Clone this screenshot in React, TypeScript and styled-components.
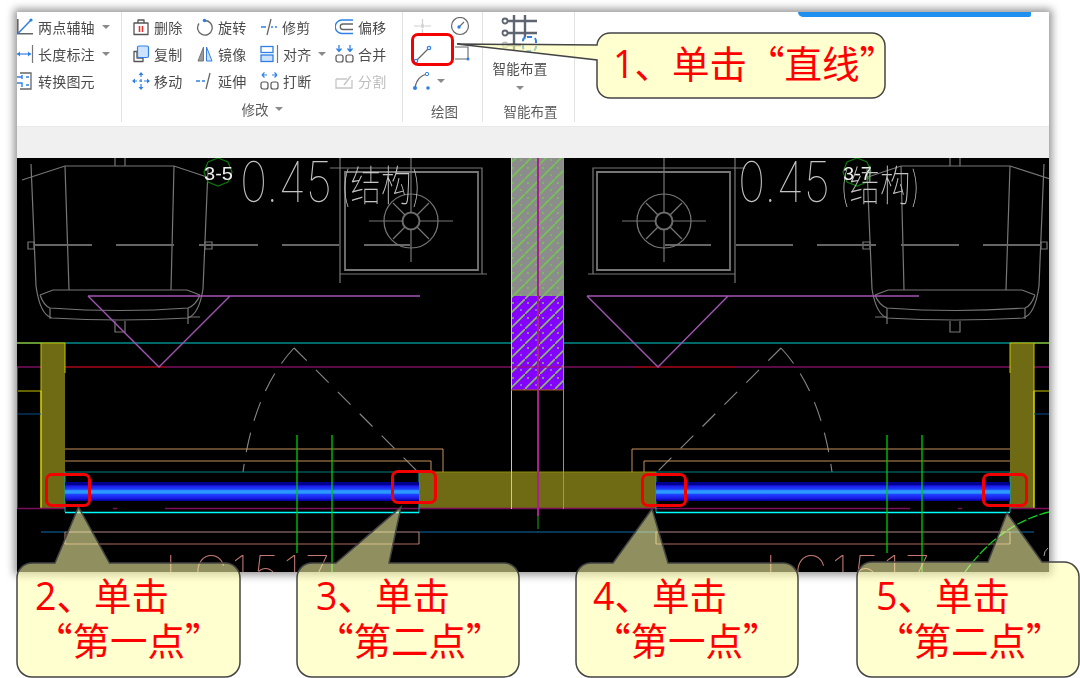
import React from "react";
import styled, { createGlobalStyle } from "styled-components";

const Global = createGlobalStyle`
  html, body { margin: 0; padding: 0; background: #fff; }
  #root { width: 1080px; height: 678px; }
`;

const FONT = `"Noto Sans CJK SC", "Liberation Sans", sans-serif`;

const Page = styled.div`
  position: relative;
  width: 1080px;
  height: 678px;
  overflow: hidden;
  background: #fff;
  padding: 12px 0 0 17px;
  box-sizing: border-box;
  font-family: ${FONT};
`;

const Win = styled.div`
  width: 1032px;
  height: 560px;
  display: flex;
  flex-direction: column;
  background: #fff;
  box-shadow: 0 0 8px 3px rgba(0, 0, 0, 0.42);
`;

const Ribbon = styled.div`
  height: 114px;
  display: flex;
  flex: none;
  background: #fff;
  filter: blur(0.45px);
  overflow: hidden;
`;

const Group = styled.section<{ $w: number }>`
  width: ${(p) => p.$w}px;
  height: 110px;
  flex: none;
  box-sizing: border-box;
  border-right: 1px solid #e2e2e2;
  display: flex;
  flex-direction: column;
  padding-top: 1px;
`;

const Rows = styled.div<{ $cols: string; $pad: number }>`
  height: 81px;
  display: grid;
  grid-template-columns: ${(p) => p.$cols};
  grid-auto-rows: 27px;
  padding-left: ${(p) => p.$pad}px;
  flex: none;
`;

const Tool = styled.div<{ $gap?: number }>`
  display: flex;
  align-items: center;
  gap: ${(p) => p.$gap ?? 4}px;
  white-space: nowrap;
`;

const Label = styled.span<{ $off?: boolean }>`
  font-size: 14px;
  line-height: 20px;
  letter-spacing: 0.2px;
  color: ${(p) => (p.$off ? "#bdbdbd" : "#4b4b4b")};
`;

const Caret = styled.i<{ $m?: number }>`
  display: inline-block;
  width: 0;
  height: 0;
  margin-left: ${(p) => p.$m ?? 3}px;
  border-left: 4px solid transparent;
  border-right: 4px solid transparent;
  border-top: 4px solid #8a8a8a;
`;

const GroupTitle = styled.div<{ $shift?: number; $down?: number }>`
  height: 24px;
  margin-top: ${(p) => 3 + (p.$down ?? 0)}px;
  padding-left: ${(p) => p.$shift ?? 0}px;
  display: flex;
  align-items: center;
  justify-content: center;
  font-size: 13.5px;
  color: #5a5a5a;
`;

const BigTool = styled.div`
  width: 74px;
  height: 81px;
  display: flex;
  flex-direction: column;
  align-items: center;
  flex: none;
`;

const BigLabel = styled(Label)`
  margin-top: 5px;
  font-size: 13.5px;
  letter-spacing: 0.2px;
`;

const BigCaret = styled(Caret)`
  margin: 8px 0 0;
`;

const Band = styled.div`
  height: 32px;
  flex: none;
  background: #f0f0f0;
  border-top: 1px solid #e9e9e9;
  box-sizing: border-box;
`;

const Canvas = styled.svg`
  display: block;
  width: 1032px;
  height: 414px;
  flex: none;
  background: #000;
  filter: blur(0.3px);
`;

const TopBar = styled.div`
  position: absolute;
  left: 798px;
  top: 12px;
  width: 233px;
  height: 5px;
  background: #1e90f0;
  border-bottom-left-radius: 5px;
  border-bottom-right-radius: 2px;
`;

const Balloons = styled.svg`
  position: absolute;
  left: 0;
  top: 0;
  width: 1080px;
  height: 678px;
`;

const Marker = styled.div<{ $x: number; $y: number; $w: number; $h: number }>`
  position: absolute;
  left: ${(p) => p.$x}px;
  top: ${(p) => p.$y}px;
  width: ${(p) => p.$w}px;
  height: ${(p) => p.$h}px;
  box-sizing: border-box;
  border: 3px solid #f40000;
  border-radius: 7px;
`;

const Note = styled.div<{ $x: number; $y: number }>`
  position: absolute;
  left: ${(p) => p.$x}px;
  top: ${(p) => p.$y}px;
  color: #ff0000;
  font-family: "Noto Sans CJK SC", sans-serif;
  font-size: 37.5px;
  line-height: 45px;
  white-space: nowrap;
`;

const NoteLine = styled.div`
  height: 45px;
`;

const Digit = styled.span`
  font-family: "Open Sans", sans-serif;
`;

/* ---------- ribbon icons ---------- */
const BLUE = "#2f80e6";
const GRAY = "#555";

const Ico = ({ w = 18, h = 18, children }: { w?: number; h?: number; children: React.ReactNode }) => (
  <svg width={w} height={h} viewBox={`0 0 ${w} ${h}`} fill="none" style={{ flex: "none" }}>
    {children}
  </svg>
);

const icons: Record<string, React.ReactNode> = {
  axis: (
    <Ico w={17}>
      <path d="M0.800 1V15.800H16" stroke="#666" strokeWidth="1.600" />
      <path d="M1 15.500L14 2" stroke={BLUE} strokeWidth="1.500" />
      <circle cx="14" cy="2" r="1.600" fill={BLUE} />
    </Ico>
  ),
  dim: (
    <Ico w={17}>
      <path d="M0 9H14" stroke={BLUE} strokeWidth="1.200" />
      <path d="M0 9l3-2.500v5zM14 9l-3-2.500v5z" fill={BLUE} />
      <path d="M15.500 0V18" stroke="#777" strokeWidth="1.200" />
    </Ico>
  ),
  conv: (
    <Ico w={15}>
      <path d="M3 1H14V17H3" stroke="#666" strokeWidth="1.300" />
      <path d="M0 5H5M5 3V7M0 11H5V15M9 5H12M9 13H12" stroke={BLUE} strokeWidth="1.400" />
    </Ico>
  ),
  del: (
    <Ico>
      <path d="M2 5H16V16.500H2ZM6 5V2H12V5" stroke={GRAY} strokeWidth="1.300" strokeLinejoin="round" />
      <path d="M7.500 8V14M10.500 8V14" stroke="#e23232" strokeWidth="1.600" />
    </Ico>
  ),
  rot: (
    <Ico>
      <path d="M9 2.500A7.300 7.300 0 1 1 3 5.500" stroke="#666" strokeWidth="1.300" />
      <circle cx="8.500" cy="2.500" r="1.800" fill={BLUE} />
    </Ico>
  ),
  trim: (
    <Ico>
      <path d="M11 1L7 17" stroke="#666" strokeWidth="1.300" />
      <path d="M1 9H6M11 9H13M15 9H17" stroke={BLUE} strokeWidth="1.400" />
    </Ico>
  ),
  offset: (
    <Ico w={19}>
      <path d="M18 2H7A6.500 6.500 0 0 0 7 15.500H18" stroke={BLUE} strokeWidth="1.300" />
      <path d="M18 6H8A2.700 2.700 0 0 0 8 11.500H18" stroke="#666" strokeWidth="1.300" />
    </Ico>
  ),
  copy: (
    <Ico>
      <path d="M2 6.500H5V13H11V16.500H2Z" stroke={GRAY} strokeWidth="1.300" strokeLinejoin="round" />
      <rect x="5.500" y="1" width="11" height="11.500" rx="1.500" fill="#cfe2fb" stroke={BLUE} strokeWidth="1.200" />
    </Ico>
  ),
  mirror: (
    <Ico>
      <path d="M7.500 2L2 16H7.500Z" fill="#9a9a9a" stroke="#777" />
      <path d="M10.500 2L16 16H10.500Z" fill="#cfe2fb" stroke={BLUE} />
    </Ico>
  ),
  align: (
    <Ico w={19}>
      <rect x="1" y="1.500" width="12" height="6" stroke={BLUE} strokeWidth="1.300" />
      <rect x="1" y="10" width="12" height="6.500" fill="#cfe2fb" stroke={BLUE} strokeWidth="1.300" />
      <path d="M17.500 0V18" stroke="#777" strokeWidth="1.200" />
    </Ico>
  ),
  merge: (
    <Ico w={19}>
      <path d="M4 0V6M15 0V6M1.500 3.500L4 6.500 6.500 3.500M12.500 3.500L15 6.500 17.500 3.500" stroke={BLUE} strokeWidth="1.300" />
      <rect x="1" y="10" width="7" height="7" rx="2" stroke={GRAY} strokeWidth="1.200" />
      <rect x="11" y="10" width="7" height="7" rx="2" stroke={GRAY} strokeWidth="1.200" />
    </Ico>
  ),
  move: (
    <Ico>
      <path d="M9 2V16M2 9H16" stroke={BLUE} strokeWidth="1.200" strokeDasharray="3 2" />
      <path d="M9 0l2.500 3h-5zM9 18l2.500-3h-5zM0 9l3-2.500v5zM18 9l-3-2.500v5z" fill={BLUE} />
    </Ico>
  ),
  ext: (
    <Ico>
      <path d="M14 1L10 17" stroke="#666" strokeWidth="1.300" />
      <path d="M0 9H4M6 9H9" stroke={BLUE} strokeWidth="1.600" />
    </Ico>
  ),
  brk: (
    <Ico w={19}>
      <path d="M7 3H2M12 3H17M2 3L4.500 .5M2 3L4.500 5.500M17 3L14.500 .5M17 3L14.500 5.500" stroke={BLUE} strokeWidth="1.200" />
      <rect x="1" y="10" width="7" height="7" rx="2" stroke={GRAY} strokeWidth="1.200" />
      <rect x="11" y="10" width="7" height="7" rx="2" stroke={GRAY} strokeWidth="1.200" />
    </Ico>
  ),
  split: (
    <Ico w={19}>
      <path d="M1 7H12M1 7V16H17V8" stroke="#c6c6c6" strokeWidth="1.300" />
      <path d="M9 13L16 4" stroke="#c6c6c6" strokeWidth="1.500" />
    </Ico>
  ),
  cross: (
    <Ico w={20} h={20}>
      <path d="M1 9H7M12 9H18M9.500 2V7M9.500 12V17" stroke="#d0d0d0" strokeWidth="1.200" />
      <circle cx="9.500" cy="9" r="2" fill="#d4d4d4" />
    </Ico>
  ),
  gauge: (
    <Ico w={20} h={20}>
      <circle cx="10" cy="9" r="8.500" stroke="#666" strokeWidth="1.200" />
      <path d="M9 10L14 5" stroke="#666" strokeWidth="1.100" />
      <circle cx="9" cy="10" r="1.700" fill={BLUE} />
    </Ico>
  ),
  line: (
    <Ico w={20} h={20}>
      <path d="M3 17L16 4" stroke="#666" strokeWidth="1.200" />
      <circle cx="3" cy="17" r="1.700" fill="#fff" stroke={BLUE} strokeWidth="1.200" />
      <circle cx="16" cy="4" r="1.700" fill="#fff" stroke={BLUE} strokeWidth="1.200" />
    </Ico>
  ),
  rect: (
    <Ico w={20} h={20}>
      <path d="M5 3H18V15H5" stroke="#666" strokeWidth="1.100" />
      <circle cx="18" cy="15" r="1.500" fill={BLUE} />
    </Ico>
  ),
  arc: (
    <Ico w={21} h={20}>
      <path d="M2 17C3 9 8 4 14 3" stroke="#666" strokeWidth="1.200" />
      <circle cx="2" cy="17" r="2" fill={BLUE} />
      <circle cx="14" cy="3" r="1.700" fill="#fff" stroke={BLUE} />
      <circle cx="15" cy="17" r="1.800" fill={BLUE} />
    </Ico>
  ),
  smart: (
    <Ico w={38} h={40}>
      <path d="M6 8H36M6 20H36M6 32H20M13 2V38M24 2V24" stroke="#5f6570" strokeWidth="2.400" />
      <circle cx="4" cy="8" r="2.500" fill="#fff" stroke="#5f6570" strokeWidth="1.800" />
      <circle cx="4" cy="20" r="2.500" fill="#fff" stroke="#5f6570" strokeWidth="1.800" />
      <circle cx="4" cy="32" r="2.500" fill="#fff" stroke="#c0c0c0" strokeWidth="1.800" />
      <rect x="22" y="24" width="13" height="14" rx="4" stroke={BLUE} strokeWidth="2" strokeDasharray="5 3" fill="#fff" />
    </Ico>
  ),
};

type T = { icon: string; text?: string; caret?: boolean; off?: boolean; gap?: number };

const axisTools: T[] = [
  { icon: "axis", text: "两点辅轴", caret: true },
  { icon: "dim", text: "长度标注", caret: true },
  { icon: "conv", text: "转换图元", gap: 6 },
];

const editTools: T[] = [
  { icon: "del", text: "删除" },
  { icon: "rot", text: "旋转" },
  { icon: "trim", text: "修剪" },
  { icon: "offset", text: "偏移" },
  { icon: "copy", text: "复制" },
  { icon: "mirror", text: "镜像" },
  { icon: "align", text: "对齐", caret: true },
  { icon: "merge", text: "合并" },
  { icon: "move", text: "移动" },
  { icon: "ext", text: "延伸" },
  { icon: "brk", text: "打断" },
  { icon: "split", text: "分割", off: true },
];

const drawTools: T[] = [
  { icon: "cross" },
  { icon: "gauge" },
  { icon: "line" },
  { icon: "rect" },
  { icon: "arc", caret: true, gap: 0 },
];

const ToolItem = ({ t }: { t: T }) => (
  <Tool $gap={t.gap}>
    {icons[t.icon]}
    {t.text && <Label $off={t.off}>{t.text}</Label>}
    {t.caret && <Caret />}
  </Tool>
);

/* ---------- CAD drawing ---------- */
const G = "#777";

const HalfPlan = () => (
  <g fill="none">
    {/* fixture */}
    <g stroke={G} strokeWidth="1.200">
      <path d="M22 181L65 167H174L207 178" />
      <path d="M31 165L36 287Q40 316 52 319Q120 323 188 319Q199 315 203 290L208 170" />
      <path d="M65 167L69 291M174 167L171 291" />
      <path d="M40 296L53 291H187L200 296M50 309Q120 314 188 309M40 296Q44 307 50 309M200 296Q196 306 188 309" />
      <path d="M50 309V320M188 309V325M188 318H200" />
      <path d="M115 159V167M125 159V167M115 322V333H125V322" />
      <path d="M28 243h6v7h-6zM205 243h7v7h-7z" />
    </g>
    <path d="M34 246H92M116 246H174M199 246H258M282 246H339M364 246H410" stroke="#666" strokeWidth="2" />
    {/* burner box */}
    <g stroke={G} strokeWidth="1.200">
      <path d="M330 169H482V275H340V284M340 159V275M340 275H487" />
      <path d="M345 173H478V271H345Z" strokeWidth="1.800" />
      <circle cx="411" cy="222" r="27" />
      <circle cx="411" cy="222" r="8.500" strokeWidth="2" stroke="#6a6a6a" />
      <path d="M369 222H403M419 222H453M411 159V214M411 230V263" />
      <path d="M393 204L405 216M429 204L417 216M393 240L405 228M429 240L417 228" />
    </g>
    {/* door swing */}
    <path d="M294 349L417 472" stroke="#888" strokeWidth="1.100" strokeDasharray="18 13" />
    <path d="M294 349Q254 392 243 473" stroke="#888" strokeWidth="1.100" strokeDasharray="20 12" />
    {/* olive column and yellow frame */}
    <rect x="41" y="344" width="24" height="165" fill="#6f6a14" />
    <path d="M17 344H65V374M41 344V509M17 392H41" stroke="#c9c400" strokeWidth="1" />
    <path d="M41 392V509" stroke="#e6e000" strokeWidth="1" />
    <path d="M17.500 368V509M17 415H41" stroke="#0a4f8a" strokeWidth="1" />
    {/* wall band */}
    <rect x="419" y="473" width="119" height="36" fill="#6f6a14" />
    <path d="M419 473H538" stroke="#8f8a10" strokeWidth="1" />
    {/* lines under the window */}
    <path d="M17 509.500H65M113 509.500H117M165 509.500H419M419 509.500H538" stroke="#7a0f5e" strokeWidth="1.600" />
    <path d="M41 533H538" stroke="#0a4a70" strokeWidth="1.600" />
    <path d="M65 533H419M65 545H419" stroke="#74483f" strokeWidth="1.400" />
    <path d="M65 533V545M419 533V545" stroke="#c09070" strokeWidth="1" />
    <path d="M65 450H443V473M65 462H431V473" stroke="#c8905c" strokeWidth="1" />
    <path d="M65 473H419" stroke="#008080" strokeWidth="1.200" />
    <path d="M65 473V513M419 473V513" stroke="#00a8a8" strokeWidth="1" />
    <path d="M65 513.500H419" stroke="#00ffff" strokeWidth="1.500" />
    {/* blue duct */}
    <rect x="65" y="483" width="354" height="19" fill="url(#duct)" />
  </g>
);

const Cad = () => (
  <Canvas viewBox="17 159 1032 414" preserveAspectRatio="none">
    <defs>
      <linearGradient id="duct" x1="0" y1="0" x2="0" y2="1">
        <stop offset="0" stopColor="#000090" />
        <stop offset="0.14" stopColor="#000090" />
        <stop offset="0.2" stopColor="#1a1ae6" />
        <stop offset="0.38" stopColor="#2040ff" />
        <stop offset="0.46" stopColor="#2a9aff" />
        <stop offset="0.58" stopColor="#2a9aff" />
        <stop offset="0.66" stopColor="#2040ff" />
        <stop offset="0.86" stopColor="#1a1ae6" />
        <stop offset="1" stopColor="#000090" />
      </linearGradient>
      <pattern id="hatchGray" width="15" height="15" patternUnits="userSpaceOnUse">
        <rect width="15" height="15" fill="#8c8c8c" />
        <path d="M-2 17L17 -2" stroke="#74c454" strokeWidth="1.600" />
        <circle cx="3" cy="4" r="1.100" fill="#74c454" />
        <circle cx="11" cy="11" r="0.900" fill="#74c454" />
      </pattern>
      <pattern id="hatchViolet" width="15" height="15" patternUnits="userSpaceOnUse">
        <rect width="15" height="15" fill="#8400ff" />
        <path d="M-2 17L17 -2" stroke="#86bf66" strokeWidth="1.600" />
        <circle cx="3" cy="4" r="1" fill="#86bf66" />
        <circle cx="11" cy="11" r="0.900" fill="#86a0b0" />
      </pattern>
    </defs>

    {/* long section lines */}
    <path d="M17 344H511M564 344H1049" stroke="#008a8a" strokeWidth="1.500" fill="none" />
    <path d="M17 368H1049" stroke="#7a0f5e" strokeWidth="1.500" fill="none" />
    <path d="M65 368H165M636 368H736" stroke="#8a0505" strokeWidth="1.500" fill="none" />

    <HalfPlan />
    <g transform="translate(1075 0) scale(-1 1)">
      <HalfPlan />
    </g>

    {/* centre column */}
    <rect x="511" y="159" width="53" height="138" fill="url(#hatchGray)" />
    <rect x="511" y="297" width="53" height="94" fill="url(#hatchViolet)" />
    <path d="M511 368H564" stroke="#a01070" strokeWidth="1.300" opacity="0.8" />
    <path d="M511.500 159V510" stroke="#e2dc00" strokeWidth="1" fill="none" />
    <path d="M563.500 159V510" stroke="#a9a400" strokeWidth="1" fill="none" />
    <path d="M511 391H564" stroke="#a05a10" strokeWidth="1" />
    <path d="M538 159V517" stroke="#a8208c" strokeWidth="2" fill="none" />
    <path d="M538 517V530" stroke="#0a5a0a" strokeWidth="2" fill="none" />

    {/* triangles */}
    <path d="M88 297H420M88 297L159 368L230 297" stroke="#a254b4" strokeWidth="1.400" fill="none" />
    <path d="M587 297H919M587 297L658 368L728 297" stroke="#a254b4" strokeWidth="1.400" fill="none" />

    {/* green risers */}
    <path d="M297 436V554M332 436V573M887 436V554M922 436V573" stroke="#00cc00" strokeWidth="1.300" fill="none" />
    <path d="M1049 513Q1000 525 965 573" stroke="#12d020" strokeWidth="1.300" strokeDasharray="10 2" fill="none" />
    <path d="M1048 549Q1044 552 1044 557" stroke="#aaa" strokeWidth="1" fill="none" />

    {/* tags */}
    <path d="M218 159l10 4 4 10-4 10-10 4-10-4-4-10 4-10z" stroke="#0a7a0a" strokeWidth="1.200" fill="none" />
    <path d="M857 159l10 4 4 10-4 10-10 4-10-4-4-10 4-10z" stroke="#0a7a0a" strokeWidth="1.200" fill="none" />
    <g fontFamily='"Liberation Sans", sans-serif' fontSize="18" fill="#eee">
      <text x="204" y="181" textLength="29" lengthAdjust="spacingAndGlyphs">3-5</text>
      <text x="843" y="181" textLength="29" lengthAdjust="spacingAndGlyphs">3-7</text>
    </g>
    <g fill="#c4c4c4" fontFamily='Inter, "Noto Sans CJK SC", sans-serif' fontWeight="100">
      <text x="240" y="203" fontSize="56" textLength="92" lengthAdjust="spacingAndGlyphs">0.45</text>
      <text x="738" y="203" fontSize="56" textLength="92" lengthAdjust="spacingAndGlyphs">0.45</text>
      <text x="341" y="202" fontSize="42" textLength="80" lengthAdjust="spacingAndGlyphs">(结构)</text>
      <text x="840" y="202" fontSize="42" textLength="80" lengthAdjust="spacingAndGlyphs">(结构)</text>
    </g>
    <g fill="#c47a72" fontFamily="Inter, sans-serif" fontWeight="100" fontSize="46">
      <text x="165" y="590" textLength="165">LC1517</text>
      <text x="765" y="590" textLength="165">LC1517</text>
    </g>
  </Canvas>
);

/* ---------- overlays ---------- */
const balloon = (
  l: number,
  t: number,
  r: number,
  b: number,
  rad: number,
  tail: string
) =>
  `M${l + rad} ${t}${tail}H${r - rad}A${rad} ${rad} 0 0 1 ${r} ${t + rad}V${b - rad}A${rad} ${rad} 0 0 1 ${r - rad} ${b}H${l + rad}A${rad} ${rad} 0 0 1 ${l} ${b - rad}V${t + rad}A${rad} ${rad} 0 0 1 ${l + rad} ${t}Z`;

const balloonPaths = [
  "M610 33H872A13 13 0 0 1 885 46V85A13 13 0 0 1 872 98H610A13 13 0 0 1 597 85V60L457 44L597 45A13 13 0 0 1 610 33Z",
  balloon(17, 563, 240, 677, 15, "H55L78.500 507L109.500 563"),
  balloon(297, 563, 519, 677, 15, "H336L401 507L389 563"),
  balloon(576, 563, 798, 677, 15, "H613L652 509L668 563"),
  balloon(857, 562, 1079, 677, 15, "H988L1007 513L1042 562"),
];

const notes = [
  { x: 613, y: 39, digit: "1", first: "、单击“直线”", second: "" },
  { x: 35, y: 571, digit: "2", first: "、单击", second: "“第一点”" },
  { x: 316, y: 571, digit: "3", first: "、单击", second: "“第二点”" },
  { x: 593, y: 571, digit: "4", first: "、单击", second: "“第一点”" },
  { x: 876, y: 571, digit: "5", first: "、单击", second: "“第二点”" },
];

const markers = [
  { x: 411, y: 33, w: 43, h: 33 },
  { x: 45, y: 473, w: 46, h: 34 },
  { x: 391, y: 470, w: 46, h: 34 },
  { x: 641, y: 473, w: 46, h: 34 },
  { x: 982, y: 473, w: 46, h: 34 },
];

export default function App() {
  return (
    <>
      <Global />
      <Page lang="zh-CN">
        <Win>
          <Ribbon>
            <Group $w={105}>
              <Rows $cols="1fr" $pad={0}>
                {axisTools.map((t) => (
                  <ToolItem key={t.icon} t={t} />
                ))}
              </Rows>
            </Group>
            <Group $w={281}>
              <Rows $cols="64px 64px 75px 1fr" $pad={10}>
                {editTools.map((t) => (
                  <ToolItem key={t.icon} t={t} />
                ))}
              </Rows>
              <GroupTitle>
                修改
                <Caret $m={6} />
              </GroupTitle>
            </Group>
            <Group $w={80}>
              <Rows $cols="37px 1fr" $pad={10}>
                {drawTools.map((t) => (
                  <ToolItem key={t.icon} t={t} />
                ))}
              </Rows>
              <GroupTitle $shift={4} $down={3}>绘图</GroupTitle>
            </Group>
            <Group $w={92}>
              <BigTool>
                {icons.smart}
                <BigLabel>智能布置</BigLabel>
                <BigCaret />
              </BigTool>
              <GroupTitle $shift={4} $down={3}>智能布置</GroupTitle>
            </Group>
          </Ribbon>
          <Band />
          <Cad />
        </Win>
        <TopBar />
        <Balloons viewBox="0 0 1080 678">
          {balloonPaths.map((d) => (
            <path key={d} d={d} fill="rgba(255,255,170,0.56)" stroke="#444" strokeWidth="1.500" />
          ))}
        </Balloons>
        {markers.map((m) => (
          <Marker key={m.x} $x={m.x} $y={m.y} $w={m.w} $h={m.h} />
        ))}
        {notes.map((n) => (
          <Note key={n.x} $x={n.x} $y={n.y}>
            <NoteLine>
              <Digit>{n.digit}</Digit>
              {n.first}
            </NoteLine>
            {n.second && <NoteLine>{n.second}</NoteLine>}
          </Note>
        ))}
      </Page>
    </>
  );
}
